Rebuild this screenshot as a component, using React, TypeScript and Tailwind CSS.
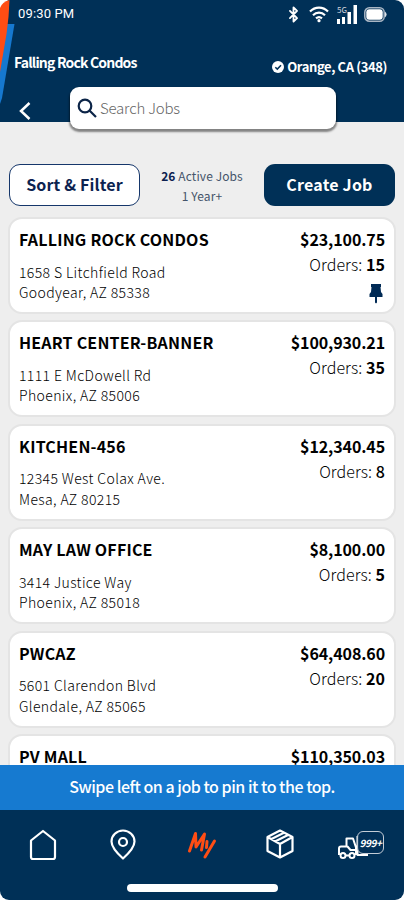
import { ReactNode } from 'react';
import { Bluetooth } from 'lucide-react';

interface Job {
  name: string;
  total: string;
  street?: string;
  city?: string;
  orders?: number;
  pinned?: boolean;
}

const jobs: Job[] = [
  { name: 'FALLING ROCK CONDOS', street: '1658 S Litchfield Road', city: 'Goodyear, AZ 85338', total: '$23,100.75', orders: 15, pinned: true },
  { name: 'HEART CENTER-BANNER', street: '1111 E McDowell Rd', city: 'Phoenix, AZ 85006', total: '$100,930.21', orders: 35 },
  { name: 'KITCHEN-456', street: '12345 West Colax Ave.', city: 'Mesa, AZ 80215', total: '$12,340.45', orders: 8 },
  { name: 'MAY LAW OFFICE', street: '3414 Justice Way', city: 'Phoenix, AZ 85018', total: '$8,100.00', orders: 5 },
  { name: 'PWCAZ', street: '5601 Clarendon Blvd', city: 'Glendale, AZ 85065', total: '$64,408.60', orders: 20 },
  { name: 'PV MALL', total: '$110,350.03' },
];

const StatusBar = () => (
  <div className="flex h-7 items-center justify-between pl-[18px] pr-[17px]">
    <span className="font-['Roboto',sans-serif] text-[13px] leading-7 tracking-[0.15px]">09:30 PM</span>
    <div className="flex items-center">
      <Bluetooth size={17} strokeWidth={2.6} className="mr-[7px]" />
      <svg width="20" height="17" viewBox="0 0 20 17" fill="none" stroke="currentColor" strokeWidth="2.2" className="mr-[7px]">
        <path d="M1 5.600C6 .4 14 .4 19 5.600M4 9.200c3.400-3.400 8.600-3.400 12 0M7 12.400c1.800-1.500 4.200-1.500 6 0" />
        <circle cx="10" cy="14.700" r="1.600" fill="currentColor" stroke="none" />
      </svg>
      <div className="relative mr-[6px]">
        <svg width="22" height="19" viewBox="0 0 22 19" fill="currentColor">
          <path d="M1 14h3v5H1zM6 12h3v7H6zM11.500 7h3.500v12h-3.500zM17.500 0h3.500v19h-3.500z" />
        </svg>
        <span className="absolute left-px top-0 text-[8px] leading-[9px] text-gray-300">5G</span>
      </div>
      <svg width="23" height="15" viewBox="0 0 23 15">
        <rect x=".8" y=".8" width="19.400" height="13.400" rx="4.500" fill="none" stroke="#a9b6c4" strokeWidth="1.500" />
        <rect x="2.300" y="2.300" width="16.400" height="10.400" rx="3" fill="white" />
        <path d="M21 4.500q3.200 3 0 6z" fill="#dbe2ea" />
      </svg>
    </div>
  </div>
);

const JobCard = ({ job }: { job: Job }) => (
  <div className="flex h-[97px] shrink-0 justify-between rounded-[14px] border-2 border-[#e4e4e4] bg-white px-[9px] pt-[9px] text-black">
    <div>
      <h2 className="text-[16px] font-bold leading-[22px] tracking-[0.2px]">{job.name}</h2>
      {job.street && (
        <div className="mt-[11.5px] text-[14px] font-light leading-[20.5px] tracking-[0.38px] text-black">
          <p>{job.street}</p>
          <p>{job.city}</p>
        </div>
      )}
    </div>
    <div className="flex flex-col items-end">
      <p className="text-[16px] font-bold leading-[22px] tracking-[-0.1px]">{job.total}</p>
      {job.orders && (
        <p className="mt-[3px] text-[16px] font-light leading-[22px] tracking-[0.08px]">
          Orders: <span className={job.orders === 8 ? 'font-medium' : 'font-bold'}>{job.orders}</span>
        </p>
      )}
      {job.pinned && (
        <svg width="14" height="20" viewBox="0 0 14 20" fill="#002a55" className="mr-[2px] mt-[9px]">
          <path d="M2 0h10v3h-.5l.5 5 1.500 2v3H8v5.500l-1 1-1-1V13H.5v-3L2 8l.5-5H2z" />
        </svg>
      )}
    </div>
  </div>
);

const NavItem = ({ children }: { children: ReactNode }) => (
  <button className="flex h-9 w-12 items-center justify-center">{children}</button>
);

export default function App() {
  return (
    <div className="flex h-[900px] w-[404px] flex-col overflow-hidden bg-white font-['Noto_Sans_CJK_SC',sans-serif]">
      {/* Header */}
      <header className="relative h-[122px] shrink-0 rounded-t-[9px] bg-[#003057] text-white">
        <svg width="15" height="106" viewBox="0 0 15 106" className="absolute left-0 top-0">
          <path d="M0 0h8L0 9z" fill="#fff" />
          <path d="M7 24h7.500L2 98 0 104V60z" fill="#1678cf" />
          <path d="M0 8Q2 2 9.500 0L8.500 17 6.500 34 0 72z" fill="#ff4d14" />
        </svg>
        <StatusBar />
        <div className="flex justify-between pl-[14px] pr-[17px] pt-[23px]">
          <h1 className="text-[14px] font-bold leading-[22px] tracking-[-0.82px]">Falling Rock Condos</h1>
          <div className="mt-[5px] flex items-center gap-[3px] text-[13px] font-bold leading-[22px] tracking-[-0.4px]">
            <svg width="12" height="12" viewBox="0 0 12 12">
              <circle cx="6" cy="6" r="6" fill="#fff" />
              <path d="m3.300 6.200 2 1.900L9 4.200" fill="none" stroke="#003057" strokeWidth="1.500" />
            </svg>
            Orange, CA (348)
          </div>
        </div>
        <div className="mt-[9px] flex items-start">
          <svg width="12" height="18" viewBox="0 0 12 18" fill="none" stroke="#fff" strokeWidth="2.500" className="ml-[19px] mt-[15px]">
            <path d="M10.500 1 2 9l8.500 8" />
          </svg>
          <div className="ml-[39px] flex h-[42px] w-[266px] items-center rounded-[9px] bg-white pl-[7px] shadow-[0_2px_2px_1px_rgba(0,0,0,0.45)]">
            <svg width="20" height="20" viewBox="0 0 20 20" fill="none" stroke="#0b2447" strokeWidth="2.200">
              <circle cx="8" cy="8" r="6.300" />
              <path d="m12.500 12.500 6.500 6.500" />
            </svg>
            <span className="ml-[3px] text-[15px] font-light leading-[22px] tracking-[-0.2px] text-[#666]">Search Jobs</span>
          </div>
        </div>
      </header>

      {/* Jobs */}
      <main className="flex min-h-0 flex-1 flex-col overflow-hidden bg-[#eeeeee] px-2 pt-[42px]">
        <div className="flex h-[42px] shrink-0 items-center justify-between px-px">
          <button className="h-[42px] w-[131px] rounded-[11px] border-[1.5px] border-[#16376b] bg-white pb-[2px] text-[16px] font-bold tracking-[0.15px] text-[#0c2350]">
            Sort &amp; Filter
          </button>
          <div className="pt-[2px] text-center text-[12px] leading-5 tracking-[0.1px] text-[#44546a]">
            <p><span className="font-bold text-[#0c1f50]">26</span> Active Jobs</p>
            <p>1 Year+</p>
          </div>
          <button className="h-[42px] w-[131px] rounded-[11px] bg-[#003057] pb-[2px] text-[16px] font-bold tracking-[0.2px] text-white">
            Create Job
          </button>
        </div>
        <div className="mt-[11px] flex flex-col gap-[6.4px]">
          {jobs.map((job) => (
            <JobCard key={job.name} job={job} />
          ))}
        </div>
      </main>

      {/* Tip */}
      <div className="flex h-[45px] shrink-0 items-center justify-center bg-[#167ad0] pb-[3px] text-[16px] font-medium leading-[22px] tracking-[-0.48px] text-white">
        Swipe left on a job to pin it to the top.
      </div>

      {/* Bottom nav */}
      <footer className="h-[90px] shrink-0 rounded-b-[9px] bg-[#003057]">
        <nav className="flex h-[74px] items-center justify-between px-[19px] pb-[4px] text-white">
          <NavItem>
            <svg width="28" height="32" viewBox="0 0 28 32" fill="none" stroke="currentColor" strokeWidth="2.200" strokeLinejoin="round">
              <path d="M14 2 26 11.500V28q0 2-2 2H4q-2 0-2-2V11.500z" />
            </svg>
          </NavItem>
          <NavItem>
            <svg width="26" height="31" viewBox="0 0 26 31" fill="none" stroke="currentColor" strokeWidth="2.200" strokeLinejoin="round" className="mb-0.5">
              <path d="M13 29.500C8 25 1.500 19 1.500 12.500a11.500 11 0 0 1 23 0C24.500 19 18 25 13 29.500z" />
              <circle cx="13" cy="13" r="4" />
            </svg>
          </NavItem>
          <NavItem>
            <svg width="30" height="30" viewBox="0 0 30 30" fill="none" stroke="#ff4d14" strokeLinejoin="round" strokeLinecap="round">
              <path d="M2.500 21 8.500 3.500 9 17 17.500 4 14.500 20" strokeWidth="3" />
              <path d="M20 11.500 19.500 17.500M27.500 11 18 27" strokeWidth="3" />
            </svg>
          </NavItem>
          <NavItem>
            <svg width="28" height="30" viewBox="0 0 28 30" fill="none" stroke="currentColor" strokeWidth="2.200" strokeLinejoin="round" className="mr-[3px] -translate-y-px">
              <path d="M14 1.500 26.500 8v14L14 28.500 1.500 22V8zM1.500 8 14 15l12.500-7M14 15v13.500M5.500 10 18.500 3.500M9 12.500 22 6" />
            </svg>
          </NavItem>
          <NavItem>
            <div className="relative h-[30px] w-[46px]">
              <svg width="30" height="30" viewBox="0 0 30 30" fill="none" stroke="currentColor" strokeWidth="2" strokeLinejoin="round">
                <path d="M8.500 16V8.500H15l3 9V25M1 18.500q0-2 2-2h6.500l3 3.500H18M1 18.500V25M8 25.500h3M19.500 6v19H30" />
                <circle cx="5" cy="25.500" r="2.500" />
                <circle cx="14" cy="25.500" r="2.500" />
              </svg>
              <span className="absolute right-0 top-[1px] flex h-[23px] w-[27px] items-center justify-center rounded-[6px] border-[1.5px] border-[#c3ccd6] bg-[#003057]/80 text-[10px] font-bold italic leading-none tracking-[-0.4px]">
                999+
              </span>
            </div>
          </NavItem>
        </nav>
        <div className="mx-auto h-[8px] w-[151px] rounded-full bg-white" />
      </footer>
    </div>
  );
}
